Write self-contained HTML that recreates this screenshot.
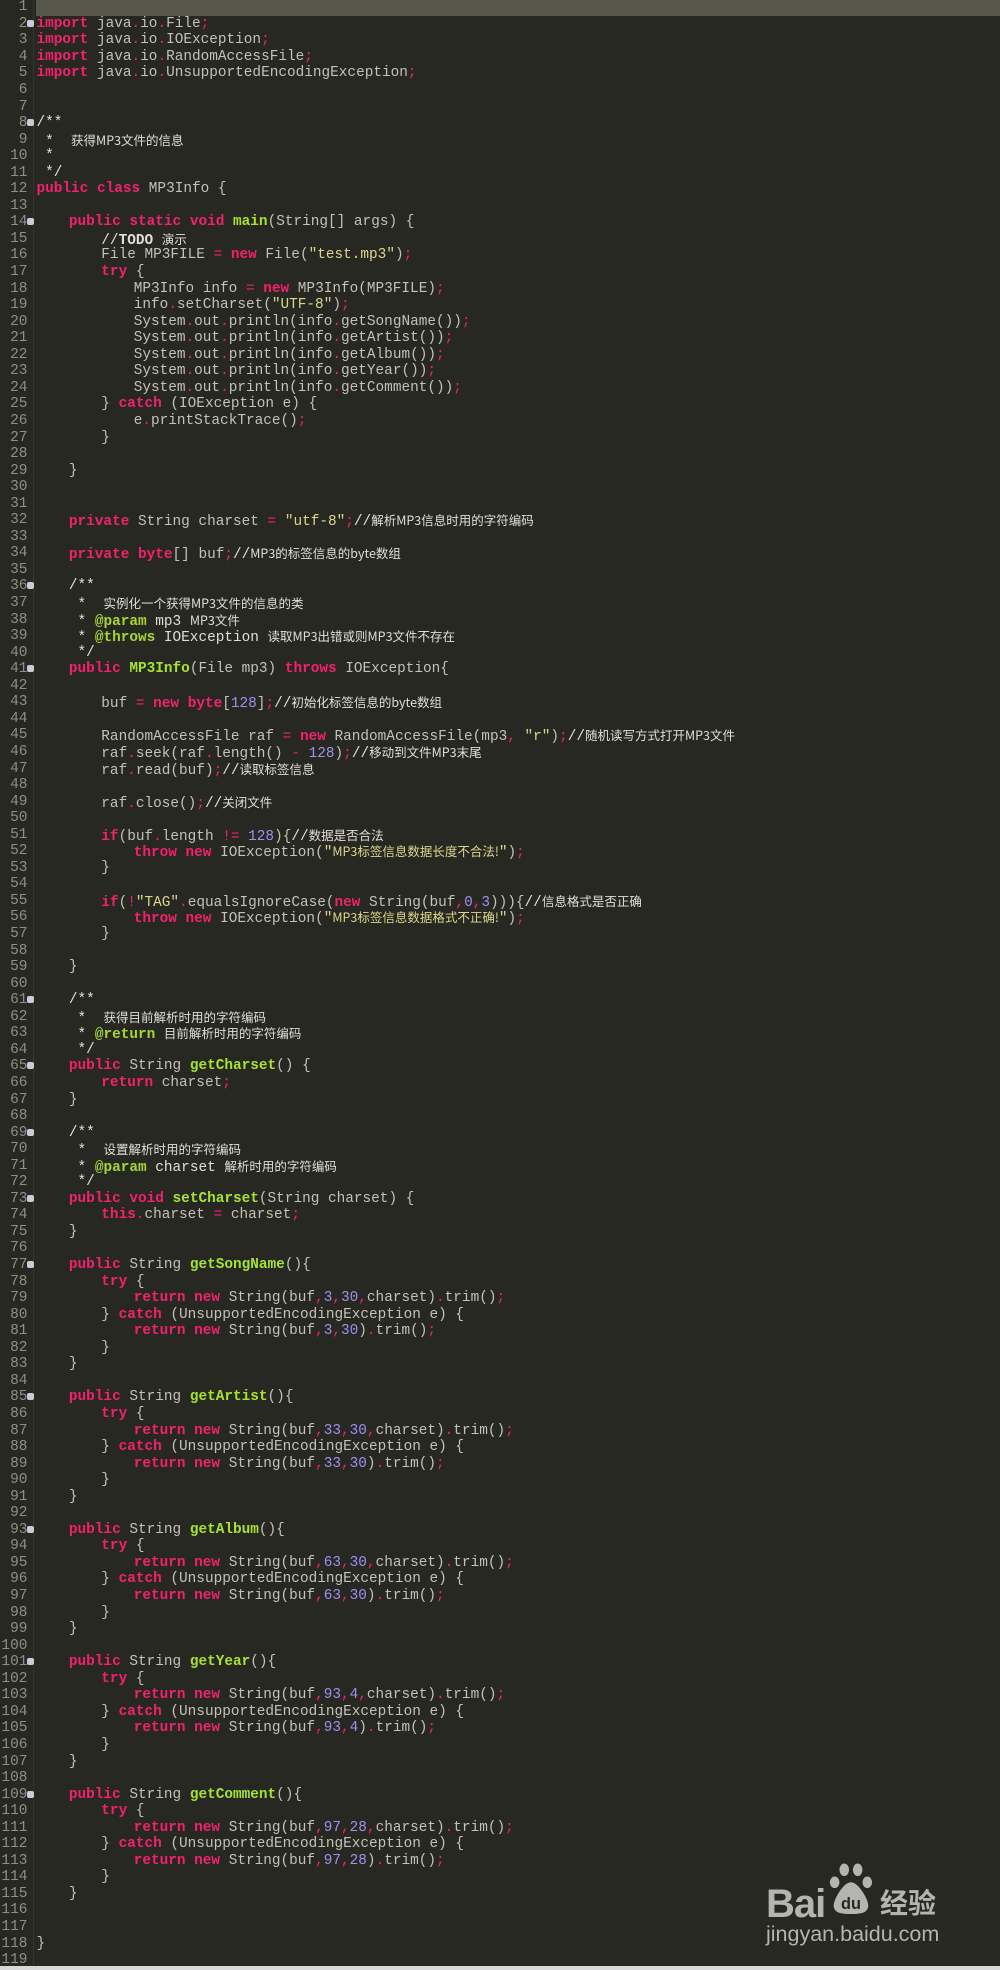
<!DOCTYPE html>
<html><head><meta charset="utf-8"><style>
html,body{margin:0;padding:0;background:#272822;}
body{width:1000px;height:1970px;position:relative;overflow:hidden;font-family:"Liberation Mono","Noto Sans CJK SC",monospace;font-size:14.4px;color:#c4c1b6;}
.hl{position:absolute;left:36px;top:0;width:964px;height:16px;background:#57574c;}
.gut{position:absolute;left:33px;top:0;width:1px;height:1966px;background:#34352e;}
.bot{position:absolute;left:0;top:1966px;width:1000px;height:4px;background:#d8d8d8;}
.l{position:absolute;left:0;height:16.55px;line-height:16.55px;white-space:pre;width:1000px;}
.n{position:absolute;left:0;width:27.5px;text-align:right;color:#8f8f85;font-size:14.5px;}
.c{position:absolute;}
.k{color:#f2216e;font-weight:bold}
.p{color:#f2216e}
.m{color:#a08ff0}
.s{color:#dcd68a}
.f{color:#a6e22e;font-weight:bold}
.a{color:#a6d62e;font-weight:bold}
.cm{color:#e0ded4}
.z{font-size:12.5px;font-family:"Noto Sans CJK SC",sans-serif;}
.fold{position:absolute;left:27px;top:4px;width:7px;height:7px;background:#c8ccd8;border-radius:2px;}
.wm{position:absolute;color:#b4b4b0;font-family:"Liberation Sans","Noto Sans CJK SC",sans-serif;line-height:1;}
</style></head><body>
<div class="hl"></div><div class="gut"></div><div class="bot"></div>
<div id="code"></div>
<script>
var L=[
"",
"<span class=k>import</span> java<span class=p>.</span>io<span class=p>.</span>File<span class=p>;</span>",
"<span class=k>import</span> java<span class=p>.</span>io<span class=p>.</span>IOException<span class=p>;</span>",
"<span class=k>import</span> java<span class=p>.</span>io<span class=p>.</span>RandomAccessFile<span class=p>;</span>",
"<span class=k>import</span> java<span class=p>.</span>io<span class=p>.</span>UnsupportedEncodingException<span class=p>;</span>",
"","",
"<span class=cm>/**</span>",
"<span class=cm> *  <span class=z>获得MP3文件的信息</span></span>",
"<span class=cm> *</span>",
"<span class=cm> */</span>",
"<span class=k>public</span> <span class=k>class</span> MP3Info {",
"",
"\t<span class=k>public</span> <span class=k>static</span> <span class=k>void</span> <span class=f>main</span>(String[] args) {",
"\t\t<span class=cm>//<b>TODO</b> <span class=z>演示</span></span>",
"\t\tFile MP3FILE <span class=p>=</span> <span class=k>new</span> File(<span class=s>\"test.mp3\"</span>)<span class=p>;</span>",
"\t\t<span class=k>try</span> {",
"\t\t\tMP3Info info <span class=p>=</span> <span class=k>new</span> MP3Info(MP3FILE)<span class=p>;</span>",
"\t\t\tinfo<span class=p>.</span>setCharset(<span class=s>\"UTF-8\"</span>)<span class=p>;</span>",
"\t\t\tSystem<span class=p>.</span>out<span class=p>.</span>println(info<span class=p>.</span>getSongName())<span class=p>;</span>",
"\t\t\tSystem<span class=p>.</span>out<span class=p>.</span>println(info<span class=p>.</span>getArtist())<span class=p>;</span>",
"\t\t\tSystem<span class=p>.</span>out<span class=p>.</span>println(info<span class=p>.</span>getAlbum())<span class=p>;</span>",
"\t\t\tSystem<span class=p>.</span>out<span class=p>.</span>println(info<span class=p>.</span>getYear())<span class=p>;</span>",
"\t\t\tSystem<span class=p>.</span>out<span class=p>.</span>println(info<span class=p>.</span>getComment())<span class=p>;</span>",
"\t\t} <span class=k>catch</span> (IOException e) {",
"\t\t\te<span class=p>.</span>printStackTrace()<span class=p>;</span>",
"\t\t}",
"",
"\t}",
"","",
"\t<span class=k>private</span> String charset <span class=p>=</span> <span class=s>\"utf-8\"</span><span class=p>;</span><span class=cm>//<span class=z>解析MP3信息时用的字符编码</span></span>",
"",
"\t<span class=k>private</span> <span class=k>byte</span>[] buf<span class=p>;</span><span class=cm>//<span class=z>MP3的标签信息的byte数组</span></span>",
"",
"\t<span class=cm>/**</span>",
"\t<span class=cm> *  <span class=z>实例化一个获得MP3文件的信息的类</span></span>",
"\t<span class=cm> * <span class=a>@param</span> mp3 <span class=z>MP3文件</span></span>",
"\t<span class=cm> * <span class=a>@throws</span> IOException <span class=z>读取MP3出错或则MP3文件不存在</span></span>",
"\t<span class=cm> */</span>",
"\t<span class=k>public</span> <span class=f>MP3Info</span>(File mp3) <span class=k>throws</span> IOException{",
"",
"\t\tbuf <span class=p>=</span> <span class=k>new</span> <span class=k>byte</span>[<span class=m>128</span>]<span class=p>;</span><span class=cm>//<span class=z>初始化标签信息的byte数组</span></span>",
"",
"\t\tRandomAccessFile raf <span class=p>=</span> <span class=k>new</span> RandomAccessFile(mp3<span class=p>,</span> <span class=s>\"r\"</span>)<span class=p>;</span><span class=cm>//<span class=z>随机读写方式打开MP3文件</span></span>",
"\t\traf<span class=p>.</span>seek(raf<span class=p>.</span>length() <span class=p>-</span> <span class=m>128</span>)<span class=p>;</span><span class=cm>//<span class=z>移动到文件MP3末尾</span></span>",
"\t\traf<span class=p>.</span>read(buf)<span class=p>;</span><span class=cm>//<span class=z>读取标签信息</span></span>",
"",
"\t\traf<span class=p>.</span>close()<span class=p>;</span><span class=cm>//<span class=z>关闭文件</span></span>",
"",
"\t\t<span class=k>if</span>(buf<span class=p>.</span>length <span class=p>!=</span> <span class=m>128</span>){<span class=cm>//<span class=z>数据是否合法</span></span>",
"\t\t\t<span class=k>throw</span> <span class=k>new</span> IOException(<span class=s>\"<span class=z>MP3标签信息数据长度不合法!</span>\"</span>)<span class=p>;</span>",
"\t\t}",
"",
"\t\t<span class=k>if</span>(<span class=p>!</span><span class=s>\"TAG\"</span><span class=p>.</span>equalsIgnoreCase(<span class=k>new</span> String(buf<span class=p>,</span><span class=m>0</span><span class=p>,</span><span class=m>3</span>))){<span class=cm>//<span class=z>信息格式是否正确</span></span>",
"\t\t\t<span class=k>throw</span> <span class=k>new</span> IOException(<span class=s>\"<span class=z>MP3标签信息数据格式不正确!</span>\"</span>)<span class=p>;</span>",
"\t\t}",
"",
"\t}",
"",
"\t<span class=cm>/**</span>",
"\t<span class=cm> *  <span class=z>获得目前解析时用的字符编码</span></span>",
"\t<span class=cm> * <span class=a>@return</span> <span class=z>目前解析时用的字符编码</span></span>",
"\t<span class=cm> */</span>",
"\t<span class=k>public</span> String <span class=f>getCharset</span>() {",
"\t\t<span class=k>return</span> charset<span class=p>;</span>",
"\t}",
"",
"\t<span class=cm>/**</span>",
"\t<span class=cm> *  <span class=z>设置解析时用的字符编码</span></span>",
"\t<span class=cm> * <span class=a>@param</span> charset <span class=z>解析时用的字符编码</span></span>",
"\t<span class=cm> */</span>",
"\t<span class=k>public</span> <span class=k>void</span> <span class=f>setCharset</span>(String charset) {",
"\t\t<span class=k>this</span><span class=p>.</span>charset <span class=p>=</span> charset<span class=p>;</span>",
"\t}",
""
];
function getter(name,a,b){return [
"\t<span class=k>public</span> String <span class=f>"+name+"</span>(){",
"\t\t<span class=k>try</span> {",
"\t\t\t<span class=k>return</span> <span class=k>new</span> String(buf<span class=p>,</span><span class=m>"+a+"</span><span class=p>,</span><span class=m>"+b+"</span><span class=p>,</span>charset)<span class=p>.</span>trim()<span class=p>;</span>",
"\t\t} <span class=k>catch</span> (UnsupportedEncodingException e) {",
"\t\t\t<span class=k>return</span> <span class=k>new</span> String(buf<span class=p>,</span><span class=m>"+a+"</span><span class=p>,</span><span class=m>"+b+"</span>)<span class=p>.</span>trim()<span class=p>;</span>",
"\t\t}",
"\t}",
""];}
L=L.concat(getter("getSongName",3,30),getter("getArtist",33,30),getter("getAlbum",63,30),getter("getYear",93,4),getter("getComment",97,28));
L.pop();
L.push("","","}","");
var folds={2:1,8:1,14:1,36:1,41:1,61:1,65:1,69:1,73:1,77:1,85:1,93:1,101:1,109:1};
var h="";
for(var i=0;i<L.length;i++){
 var n=i+1,s=L[i],t=0;
 while(s.charAt(0)=="\t"){t++;s=s.substring(1);}
 var yy=(n-1)*16.55-0.8;
 h+='<div class="l" style="top:'+yy+'px"><span class="n">'+n+'</span>'+(folds[n]?'<span class="fold"></span>':'')+'<span class="c" style="left:'+(36.5+t*32.4)+'px">'+s+'</span></div>';
}
document.getElementById("code").innerHTML=h;
</script>
<div class="wm" style="left:766px;top:1884px;font-size:40px;font-weight:bold;letter-spacing:-1px;">Bai</div>
<svg class="wm" style="left:826px;top:1860px" width="48" height="58" viewBox="0 0 50 58">
<ellipse cx="19" cy="9" rx="5" ry="6.5" fill="#b4b4b0"/><ellipse cx="33" cy="9" rx="5" ry="6.5" fill="#b4b4b0"/>
<ellipse cx="9" cy="22" rx="5" ry="6" fill="#b4b4b0"/><ellipse cx="43" cy="22" rx="5" ry="6" fill="#b4b4b0"/>
<path d="M26 22 C18 22 8 40 8 46 C8 54 16 55 26 55 C36 55 44 54 44 46 C44 40 34 22 26 22Z" fill="#b4b4b0"/>
<text x="26" y="50" text-anchor="middle" font-family="Liberation Sans" font-size="17" font-weight="bold" fill="#272822">du</text>
</svg>
<div class="wm" style="left:880px;top:1890px;font-size:28px;font-weight:bold;">经验</div>
<div class="wm" style="left:766px;top:1924px;font-size:21.5px;">jingyan.baidu.com</div>
</body></html>
